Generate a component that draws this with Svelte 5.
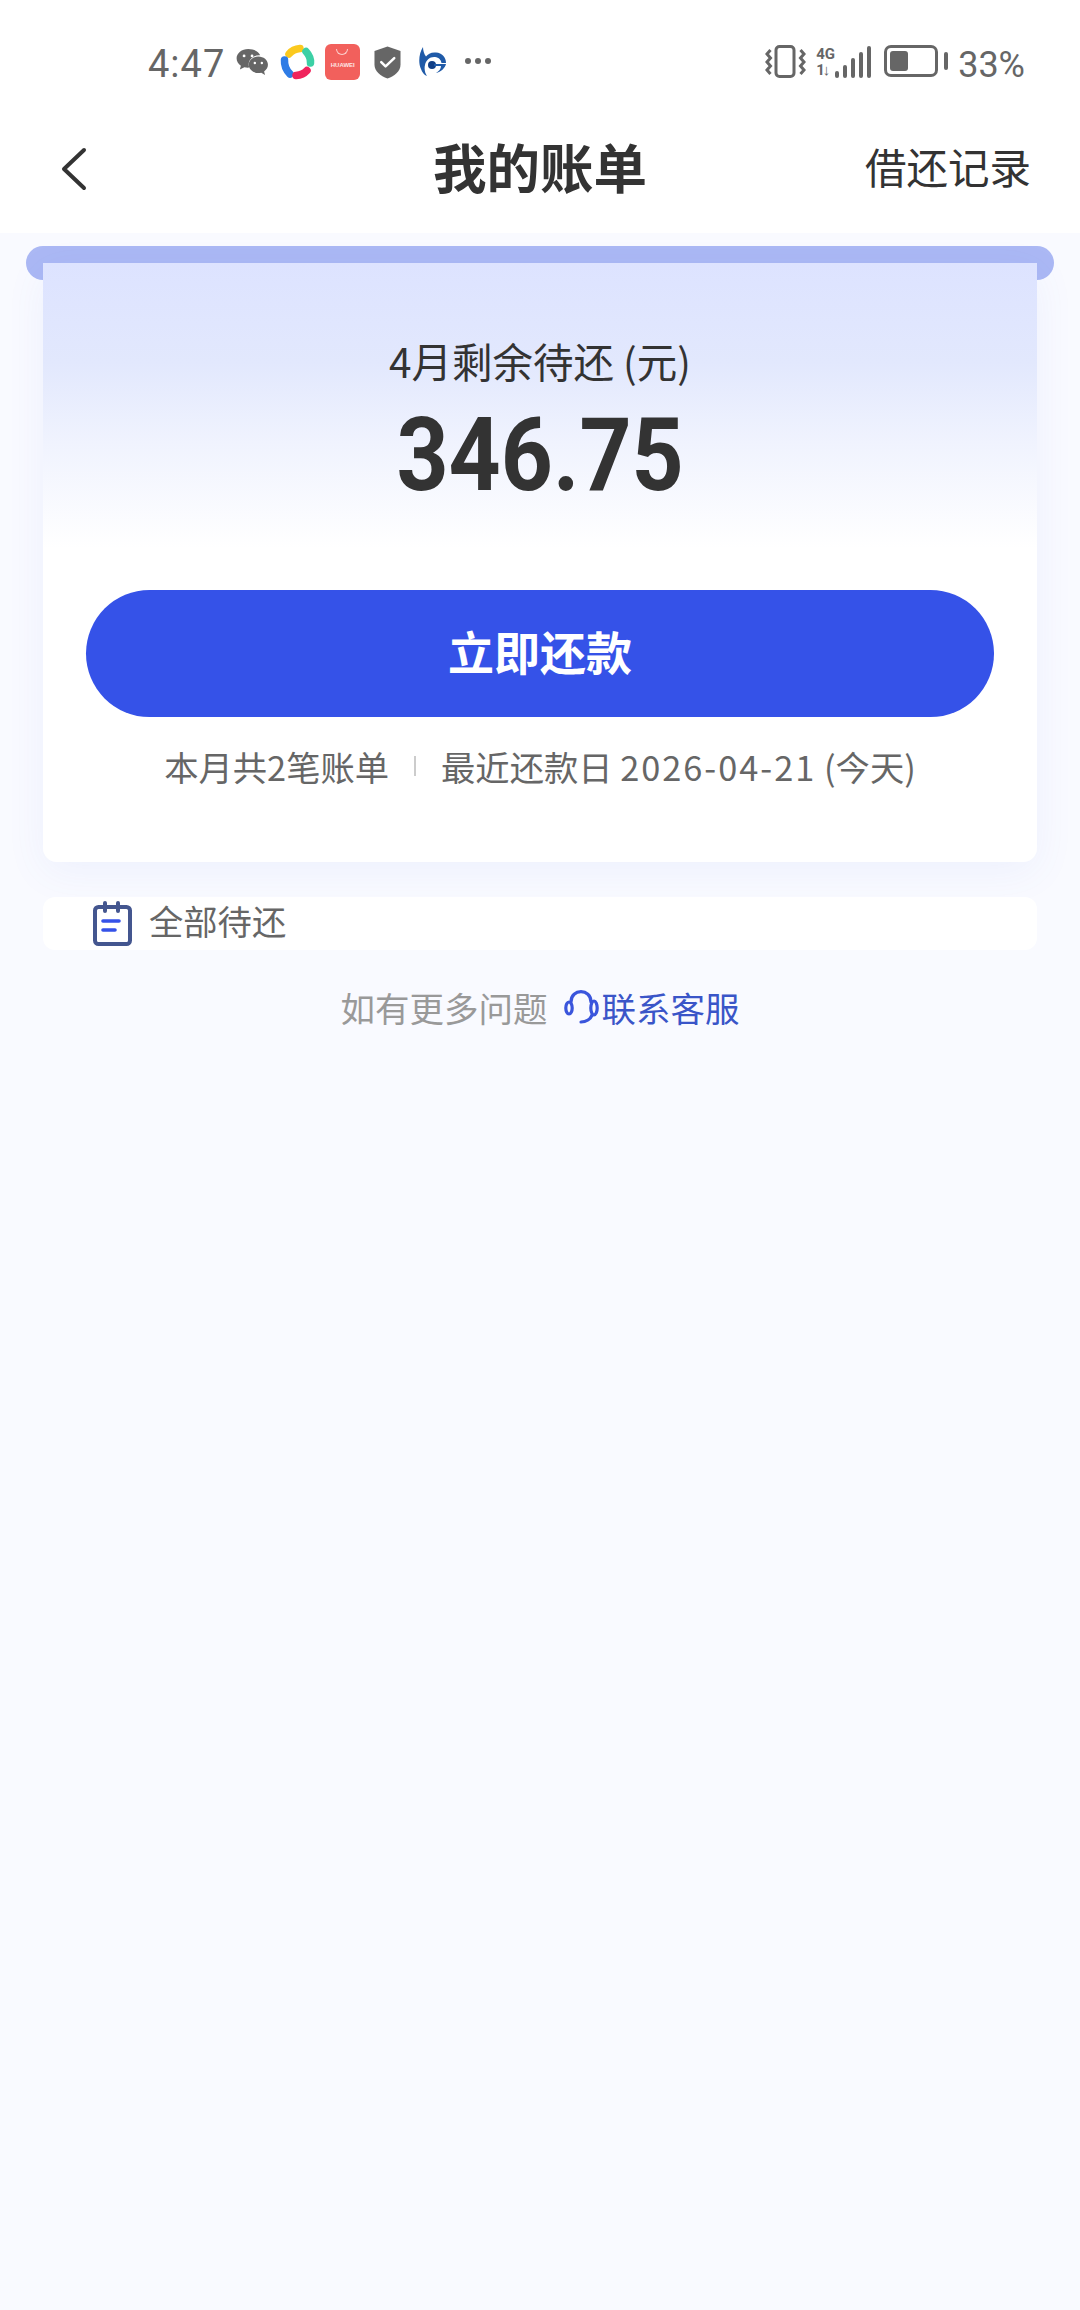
<script>
  let billCount = 2;
  let dueDate = '2026-04-21';
  let amount = '346.75';
</script>

<div class="page">
  <header class="top">
    <div class="status">
      <div class="status-left">
        <span class="time">4:47</span>
        <div class="notif">
          <!-- wechat -->
          <svg class="ic-wechat" width="33" height="29" viewBox="1 1 35 31">
            <path d="M14 2C7 2 1.500 6.500 1.500 12c0 3.200 1.800 6 4.600 7.900L5 24l4.800-2.500c1.200.3 2.400.5 3.700.5.500 0 1 0 1.500-.1-.4-1.100-.6-2.200-.6-3.400 0-5.600 5.200-9.800 11.300-9.800h1C25.400 4.900 20.200 2 14 2z" fill="#666"/>
            <path d="M35 19c0-5-4.800-8.800-10.200-8.800S14.500 14 14.500 19s4.800 8.800 10.300 8.800c1.100 0 2.100-.1 3.100-.4l4 2.400-1-3.700c2.500-1.700 4.100-4.100 4.100-7.100z" fill="#666"/>
            <circle cx="9.500" cy="9.500" r="1.500" fill="#fff"/><circle cx="18" cy="9.500" r="1.500" fill="#fff"/>
            <circle cx="21" cy="17" r="1.300" fill="#fff"/><circle cx="28.500" cy="17" r="1.300" fill="#fff"/>
          </svg>
          <!-- app market -->
          <svg class="ic-market" width="36" height="36" viewBox="0 0 36 36" fill="none" stroke-width="7.500" stroke-linecap="round">
            <path d="M9 10Q13 5 20 4.500" stroke="#fbc91e"/>
            <path d="M26 7.500Q31 13 30.500 19" stroke="#3cd0a5"/>
            <path d="M4.500 16Q4 24 10 30" stroke="#2e7ce6"/>
            <path d="M16 31.500Q23 31 27 26.500" stroke="#f0245c"/>
          </svg>
          <div class="hw"><i></i><b>HUAWEI</b></div>
          <!-- shield -->
          <svg class="ic-shield" width="27" height="33" viewBox="0 0 28 34">
            <path d="M14 .500 27.500 5v14c0 7-6 12-13.500 14.500C6.500 31 .500 26 .500 19V5z" fill="#666"/>
            <path d="M7.500 16.500l4.500 4.500 9-8.500" fill="none" stroke="#fff" stroke-width="2.600" stroke-linecap="round" stroke-linejoin="round"/>
          </svg>
          <!-- bank logo -->
          <svg class="ic-bank" width="27" height="30" viewBox="0 0 27 30">
            <path d="M4 0C0 6-1 16 2 22c1 3 3 6 6 7-2-3-3-7-2-11 1-5 5-8.500 10-8 4 .5 6 3 6.500 6H27c0-6-4-10-10-10.500-5-.5-8 1.500-10 4C5 7 4 3 4 0z" fill="#1f5aa8"/>
            <circle cx="13" cy="18" r="4" fill="#123f86"/>
            <path d="M15 17h12c-1 4-5 8-10 9 3-2 5-4 5-7h-7z" fill="#1f5aa8"/>
          </svg>
          <div class="dots"><i></i><i></i><i></i></div>
        </div>
      </div>
      <div class="status-right">
        <!-- vibrate -->
        <svg width="41" height="34" viewBox="0 0 41 34" fill="none" stroke="#666">
          <rect x="11" y="1.500" width="18" height="30" rx="3.500" stroke-width="3"/>
          <path d="M5.500 5 2 9l3.500 4L2 17l3.500 4L2 25l3.500 4" stroke-width="3"/>
          <path d="M35.500 5l3.500 4-3.500 4 3.500 4-3.500 4 3.500 4-3.500 4" stroke-width="3"/>
        </svg>
        <div class="signal">
          <div class="net"><span>4G</span><span class="sub">1↓</span></div>
          <div class="bars">
            <i style="height: 7px"></i><i style="height: 13px"></i><i style="height: 20px"></i><i style="height: 26px"></i><i style="height: 32px"></i>
          </div>
        </div>
        <div class="battery"><div class="cell"><div class="fill" style="width: 18px"></div></div><div class="nub"></div></div>
        <span class="pct">33%</span>
      </div>
    </div>
    <nav class="nav">
      <svg class="back" width="26" height="44" viewBox="0 0 26 44" fill="none">
        <path d="M23 3 3 22l20 19" stroke="#333" stroke-width="4" stroke-linecap="round" stroke-linejoin="round"/>
      </svg>
      <h1>我的账单</h1>
      <span class="records">借还记录</span>
    </nav>
  </header>

  <main class="body">
    <div class="slot"></div>
    <section class="card">
      <div class="summary">
        <p class="label">4月剩余待还 (元)</p>
        <p class="amount">{amount}</p>
      </div>
      <button class="pay">立即还款</button>
      <p class="meta">
        <span>本月共{billCount}笔账单</span>
        <i class="sep"></i>
        <span>最近还款日 <span class="date">{dueDate}</span> (今天)</span>
      </p>
    </section>

    <div class="pending">
      <svg width="40" height="46" viewBox="0 0 40 46" fill="none">
        <rect x="2" y="6" width="35" height="37" rx="3.500" stroke="#44568f" stroke-width="4"/>
        <path d="M12 2v8M25 2v8" stroke="#44568f" stroke-width="4" stroke-linecap="round"/>
        <path d="M10 20h16M10 29h12" stroke="#3552e8" stroke-width="3.600" stroke-linecap="round"/>
      </svg>
      <span>全部待还</span>
    </div>

    <p class="help">
      <span class="q">如有更多问题</span>
      <svg width="36" height="36" viewBox="0 0 36 36" fill="none" stroke="#3a55dc" stroke-width="3.200" stroke-linecap="round">
        <path d="M7 12C7 5 12 1.700 17 1.700S27 5 27 12"/>
        <ellipse cx="5" cy="18" rx="3.200" ry="6"/>
        <ellipse cx="30" cy="18" rx="3.200" ry="7"/>
        <path d="M28 25C27 29 22 32 17 32"/>
      </svg>
      <span class="link">联系客服</span>
    </p>
  </main>
</div>

<style>
  :global(body) {
    margin: 0;
    background: #f9faff;
  }

  .page {
    width: 1080px;
    min-height: 2310px;
    background: #f9faff;
    font-family: "Noto Sans CJK SC", "Noto Sans", sans-serif;
    color: #333;
  }

  .top {
    background: #fff;
    height: 233px;
  }

  .status {
    height: 110px;
    padding: 42px 55px 0 148px;
    box-sizing: border-box;
    display: flex;
    justify-content: space-between;
  }

  .status-left,
  .status-right {
    display: flex;
    align-items: flex-start;
  }

  .time {
    font-family: Roboto, sans-serif;
    font-size: 38px;
    line-height: 44px;
    color: #666;
    letter-spacing: 1px;
  }

  .notif {
    display: flex;
    align-items: center;
    margin-left: 11px;
    height: 40px;
  }

  .ic-market {
    margin-left: 11px;
  }

  .ic-shield {
    margin-left: 14px;
  }

  .ic-bank {
    margin-left: 18px;
  }

  .hw {
    width: 35px;
    height: 36px;
    margin-left: 9px;
    border-radius: 6px;
    background: #f2605c;
    position: relative;
    display: flex;
    align-items: center;
    justify-content: center;
  }

  .hw i {
    position: absolute;
    left: 11px;
    top: 5px;
    width: 12px;
    height: 6px;
    border: 1.500px solid #fbd0ce;
    border-top: 0;
    border-radius: 0 0 7px 7px;
    box-sizing: border-box;
  }

  .hw b {
    font: 700 6px "Liberation Sans", sans-serif;
    color: #fde6e5;
    margin-top: 6px;
  }

  .dots {
    display: flex;
    gap: 4px;
    margin-left: 19px;
    margin-top: -2px;
  }

  .dots i {
    width: 6px;
    height: 6px;
    border-radius: 50%;
    background: #666;
  }

  .status-right {
    padding-top: 3px;
  }

  .signal {
    display: flex;
    align-items: flex-end;
    margin-left: 10px;
    height: 33px;
  }

  .net {
    display: flex;
    flex-direction: column;
    font: 700 15px/16px Roboto, sans-serif;
    color: #666;
    width: 19px;
    white-space: nowrap;
  }

  .sub {
    letter-spacing: -2px;
  }

  .bars {
    display: flex;
    align-items: flex-end;
    gap: 4px;
  }

  .bars i {
    width: 4px;
    border-radius: 2px;
    background: #666;
  }

  .battery {
    display: flex;
    align-items: center;
    margin-left: 13px;
    gap: 6px;
  }

  .cell {
    width: 54px;
    height: 32px;
    border: 3px solid #666;
    border-radius: 7px;
    box-sizing: border-box;
    padding: 3px;
  }

  .fill {
    height: 100%;
    background: #666;
    border-radius: 3px;
  }

  .nub {
    width: 4px;
    height: 18px;
    background: #666;
    border-radius: 2px;
  }

  .pct {
    font-family: Roboto, sans-serif;
    font-size: 36px;
    line-height: 40px;
    color: #666;
    margin-left: 10px;
  }

  .nav {
    height: 123px;
    position: relative;
    display: flex;
    align-items: center;
    justify-content: center;
  }

  .back {
    position: absolute;
    left: 61px;
    top: 37px;
  }

  h1 {
    margin: -12px 0 0;
    font-size: 53.500px;
    font-weight: 700;
    color: #333;
    line-height: 1;
  }

  .records {
    position: absolute;
    right: 49px;
    top: 32px;
    font-size: 41.500px;
    line-height: 1.2;
    color: #333;
  }

  .body {
    padding: 13px 26px 0;
  }

  .slot {
    height: 34px;
    border-radius: 17px;
    background: #abb8f4;
  }

  .card {
    margin: -17px 17px 0;
    height: 599px;
    background: linear-gradient(#dde3ff 0, #e2e8fd 100px, #f0f3fe 180px, #fff 285px);
    border-radius: 0 0 14px 14px;
    box-shadow: 0 10px 40px rgba(90, 110, 220, 0.07);
    padding: 0 43px;
    box-sizing: border-box;
    display: flex;
    flex-direction: column;
    align-items: center;
  }

  .summary {
    text-align: center;
  }

  .label {
    margin: 78px 0 0;
    font-size: 40.500px;
    line-height: 1;
    color: #333;
  }

  .amount {
    margin: 22px 0 0;
    font: 700 102px/1 Roboto, sans-serif;
    color: #333;
    transform: scaleX(0.892);
  }

  .pay {
    margin-top: 84px;
    width: 100%;
    height: 127px;
    flex-shrink: 0;
    border: 0;
    border-radius: 64px;
    padding: 0 0 7px;
    background: #3552e8;
    color: #fff;
    font: 700 46px "Noto Sans CJK SC", sans-serif;
  }

  .meta {
    margin: 29px 0 0;
    display: flex;
    align-items: center;
    font-size: 34.300px;
    line-height: 1.2;
    color: #666;
    white-space: nowrap;
  }

  .date {
    letter-spacing: 2px;
  }

  .sep {
    width: 2px;
    height: 20px;
    background: #ccc;
    margin: 0 25px;
  }

  .pending {
    margin: 35px 17px 0;
    height: 53px;
    background: #fff;
    border-radius: 12px;
    display: flex;
    align-items: center;
    padding-left: 50px;
    gap: 16px;
    font-size: 34.300px;
    color: #666;
  }

  .pending span {
    margin-bottom: 8px;
  }

  .help {
    margin: 37px 0 0;
    display: flex;
    align-items: center;
    justify-content: center;
    font-size: 34.500px;
    line-height: 1.2;
  }

  .help svg {
    margin: 0 2px 0 16px;
  }

  .q {
    color: #999;
  }

  .link {
    color: #3a55c8;
  }
</style>
